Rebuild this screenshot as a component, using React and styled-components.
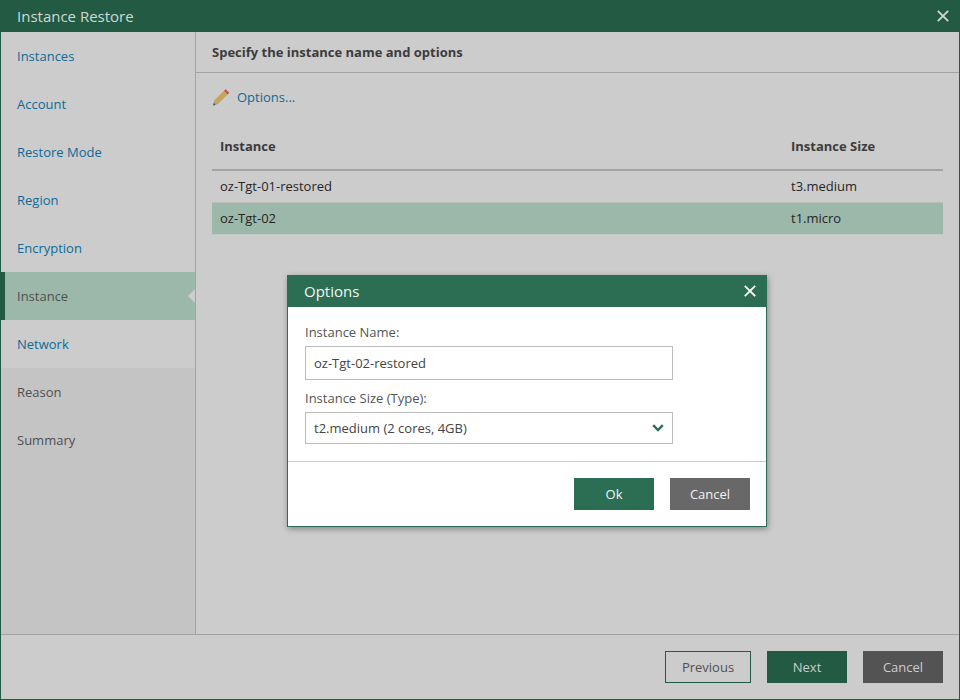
import React from "react";
import styled, { createGlobalStyle } from "styled-components";

const GlobalStyle = createGlobalStyle`
  html, body {
    margin: 0;
    padding: 0;
    background: #cccccc;
  }
  body {
    font-family: "Open Sans", "Liberation Sans", sans-serif;
    font-size: 13px;
    color: #3c3c3c;
  }
`;

const Window = styled.div`
  position: relative;
  box-sizing: border-box;
  width: 960px;
  height: 700px;
  display: flex;
  flex-direction: column;
  background: #cccccc;
  border: 1px solid #235a43;
  border-top: 0;
`;

const TitleBar = styled.div`
  flex: none;
  height: 32px;
  margin: 0 -1px;
  padding: 0 11px 0 17px;
  display: flex;
  align-items: center;
  justify-content: space-between;
  background: #235a43;
  color: #cfd9d4;
  font-size: 15px;
`;

const CloseIcon = ({ size = 12, color }) => (
  <svg width={size} height={size} viewBox="0 0 12 12">
    <path d="M0.8 0.8 L11.2 11.2 M11.2 0.8 L0.8 11.2" stroke={color} strokeWidth="1.8" fill="none" />
  </svg>
);

const Body = styled.div`
  flex: 1;
  min-height: 0;
  display: flex;
`;

const Sidebar = styled.nav`
  flex: none;
  box-sizing: border-box;
  width: 195px;
  display: flex;
  flex-direction: column;
  background: #c4c4c4;
  border-right: 1px solid #a3a3a3;
`;

const Step = styled.div`
  position: relative;
  box-sizing: border-box;
  height: 48px;
  padding-left: ${(p) => (p.$active ? "12px" : "16px")};
  display: flex;
  align-items: center;
  background: ${(p) => (p.$active ? "#9cb8aa" : p.$disabled ? "#c4c4c4" : "#cccccc")};
  border-left: ${(p) => (p.$active ? "4px solid #235a43" : "0")};
  color: ${(p) => (p.$active || p.$disabled ? "#505050" : "#0f6a96")};

  ${(p) =>
    p.$active &&
    `&::after {
      content: "";
      position: absolute;
      right: 0;
      top: 17px;
      border: 7px solid transparent;
      border-left: 0;
      border-right-color: #cccccc;
    }`}
`;

const Main = styled.main`
  flex: 1;
  min-width: 0;
  display: flex;
  flex-direction: column;
`;

const MainHeader = styled.div`
  flex: none;
  box-sizing: border-box;
  height: 41px;
  padding: 0 16px 0;
  display: flex;
  align-items: center;
  border-bottom: 1px solid #a3a3a3;
  font-weight: 700;
  color: #3c3c3c;
`;

const MainContent = styled.div`
  flex: 1;
  padding: 0 16px;
`;

const OptionsLink = styled.div`
  height: 48px;
  display: flex;
  align-items: center;
  gap: 7px;
  color: #0f6a96;
`;

const Table = styled.div`
  width: 731px;
  margin-top: 1px;
`;

const Row = styled.div`
  box-sizing: border-box;
  height: ${(p) => (p.$head ? "49px" : "32px")};
  display: grid;
  grid-template-columns: 571px 1fr;
  align-items: center;
  padding: ${(p) => (p.$head ? "0 8px" : "0 8px 1px")};
  font-weight: ${(p) => (p.$head ? 700 : 400)};
  color: ${(p) => (p.$head ? "#3c3c3c" : "#262626")};
  background: ${(p) => (p.$selected ? "#9cb8aa" : "transparent")};
  border-bottom: ${(p) =>
    p.$head ? "2px solid #a3a3a3" : p.$selected ? "1px solid #c0c8c4" : "1px solid #bcbcbc"};
`;

const Footer = styled.footer`
  flex: none;
  box-sizing: border-box;
  height: 65px;
  padding: 16px 16px 0 0;
  display: flex;
  justify-content: flex-end;
  gap: 16px;
  border-top: 1px solid #a3a3a3;
`;

const Button = styled.button`
  box-sizing: border-box;
  width: ${(p) => p.$width || "80px"};
  height: 32px;
  padding: 0;
  font: inherit;
  color: ${(p) => p.$color || "#cccccc"};
  background: ${(p) => p.$bg || "transparent"};
  border: ${(p) => (p.$outline ? `1px solid ${p.$outline}` : "0")};
`;

const Modal = styled.div`
  position: absolute;
  left: 286px;
  top: 275px;
  box-sizing: border-box;
  width: 480px;
  height: 252px;
  display: flex;
  flex-direction: column;
  background: #ffffff;
  border: 1px solid #2c6e53;
  border-top: 0;
  box-shadow: 1px 2px 6px rgba(0, 0, 0, 0.35);
`;

const ModalTitle = styled.div`
  flex: none;
  height: 32px;
  margin: 0 -1px;
  padding: 0 11px 0 17px;
  display: flex;
  align-items: center;
  justify-content: space-between;
  background: #2c6e53;
  color: #f2f6f4;
  font-size: 15px;
`;

const ModalBody = styled.div`
  flex: none;
  box-sizing: border-box;
  height: 155px;
  padding: 16px 17px 0;
  border-bottom: 1px solid #cccccc;
  color: #555555;
`;

const Label = styled.div`
  height: 18px;
  line-height: 18px;
  margin-top: ${(p) => p.$gap || 0};
`;

const Field = styled.div`
  box-sizing: border-box;
  width: 368px;
  height: ${(p) => p.$height};
  margin-top: ${(p) => p.$gap};
  padding: 0 8px;
  display: flex;
  align-items: center;
  justify-content: space-between;
  border: 1px solid #bcbcbc;
  color: #444444;
`;

const ModalActions = styled.div`
  flex: 1;
  padding: 16px 16px 0 0;
  display: flex;
  justify-content: flex-end;
  gap: 16px;
`;

const PencilIcon = () => (
  <svg width="18" height="18" viewBox="0 0 18 18">
    <path d="M2.5 12 L12 2.8 L15.6 6.4 L6 16 Z" fill="#c9a35c" />
    <path d="M12 2.8 L13.6 1.2 L17.2 4.8 L15.6 6.4 Z" fill="#c0504d" />
    <path d="M2.5 12 L6 16 L1.2 17.4 Z" fill="#a8a08c" />
    <path d="M1.2 17.4 L1.7 15 L3.6 16.7 Z" fill="#444444" />
  </svg>
);

const Chevron = styled.svg`
  margin-top: -1px;
`;

const steps = [
  { name: "Instances" },
  { name: "Account" },
  { name: "Restore Mode" },
  { name: "Region" },
  { name: "Encryption" },
  { name: "Instance", active: true },
  { name: "Network" },
  { name: "Reason", disabled: true },
  { name: "Summary", disabled: true },
];

const App = () => (
  <>
    <GlobalStyle />
    <Window>
      <TitleBar>
        Instance Restore
        <CloseIcon color="#cfd9d4" />
      </TitleBar>
      <Body>
        <Sidebar>
          {steps.map((s) => (
            <Step key={s.name} $active={s.active} $disabled={s.disabled}>
              {s.name}
            </Step>
          ))}
        </Sidebar>
        <Main>
          <MainHeader>Specify the instance name and options</MainHeader>
          <MainContent>
            <OptionsLink>
              <PencilIcon />
              Options...
            </OptionsLink>
            <Table>
              <Row $head>
                <span>Instance</span>
                <span>Instance Size</span>
              </Row>
              <Row>
                <span>oz-Tgt-01-restored</span>
                <span>t3.medium</span>
              </Row>
              <Row $selected>
                <span>oz-Tgt-02</span>
                <span>t1.micro</span>
              </Row>
            </Table>
          </MainContent>
        </Main>
      </Body>
      <Footer>
        <Button $width="86px" $outline="#235a43" $color="#505050">
          Previous
        </Button>
        <Button $bg="#235a43">Next</Button>
        <Button $bg="#535353">Cancel</Button>
      </Footer>
      <Modal>
        <ModalTitle>
          Options
          <CloseIcon color="#ffffff" />
        </ModalTitle>
        <ModalBody>
          <Label>Instance Name:</Label>
          <Field $height="34px" $gap="5px">
            oz-Tgt-02-restored
          </Field>
          <Label $gap="9px">Instance Size (Type):</Label>
          <Field $height="32px" $gap="5px">
            t2.medium (2 cores, 4GB)
            <Chevron width="12" height="8" viewBox="0 0 12 8">
              <path d="M1.2 1.2 L6 6 L10.8 1.2" stroke="#2c6e53" strokeWidth="2.4" fill="none" />
            </Chevron>
          </Field>
        </ModalBody>
        <ModalActions>
          <Button $bg="#2c6e53" $color="#f2f6f4">
            Ok
          </Button>
          <Button $bg="#686868" $color="#f2f2f2">
            Cancel
          </Button>
        </ModalActions>
      </Modal>
    </Window>
  </>
);

export default App;
